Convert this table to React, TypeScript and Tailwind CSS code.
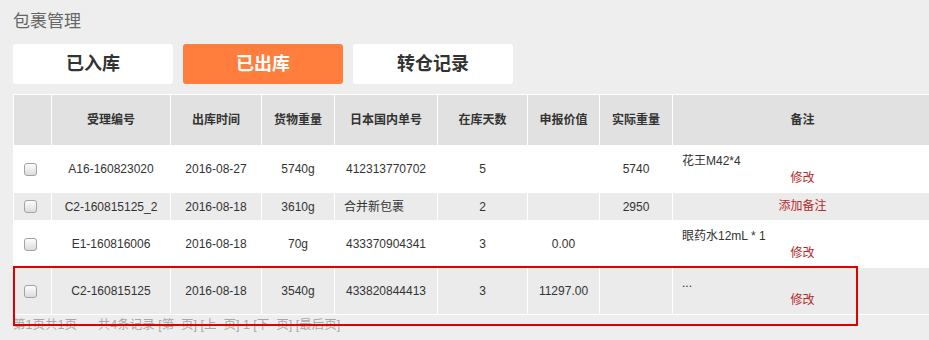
import React from 'react'

type Row = {
  no: string
  date: string
  weight: string
  jpNo: string
  days: string
  value: string
  actual: string
  note: string
  action: string
  tall: boolean
  shaded: boolean
}

const rows: Row[] = [
  { no: 'A16-160823020', date: '2016-08-27', weight: '5740g', jpNo: '412313770702', days: '5', value: '', actual: '5740', note: '花王M42*4', action: '修改', tall: true, shaded: false },
  { no: 'C2-160815125_2', date: '2016-08-18', weight: '3610g', jpNo: '合并新包裹', days: '2', value: '', actual: '2950', note: '', action: '添加备注', tall: false, shaded: true },
  { no: 'E1-160816006', date: '2016-08-18', weight: '70g', jpNo: '433370904341', days: '3', value: '0.00', actual: '', note: '眼药水12mL * 1', action: '修改', tall: true, shaded: false },
  { no: 'C2-160815125', date: '2016-08-18', weight: '3540g', jpNo: '433820844413', days: '3', value: '11297.00', actual: '', note: '...', action: '修改', tall: true, shaded: true },
]

const headers = ['', '受理编号', '出库时间', '货物重量', '日本国内单号', '在库天数', '申报价值', '实际重量', '备注']

function Checkbox() {
  return (
    <span className="block w-[13px] h-[13px] rounded-[3px] border border-[#a3a3a3] bg-gradient-to-b from-[#fdfdfd] to-[#dcdcdc]" />
  )
}

export default function App() {
  return (
    <div className="relative w-[929px] h-[340px] overflow-hidden bg-[#eeeeee] text-[#333] font-['Liberation_Sans','Noto_Sans_CJK_SC',sans-serif]">
      <div className="pl-[13px] pt-[11px]">
        <h2 className="text-[17px] leading-[22px] text-[#666]">包裹管理</h2>

        <div className="mt-[11px] flex gap-[10px]">
          <button className="w-[160px] h-[40px] rounded-[3px] bg-white text-[18px] font-bold text-[#333]">已入库</button>
          <button className="w-[160px] h-[40px] rounded-[3px] bg-[#ff7e3d] text-[18px] font-bold text-white">已出库</button>
          <button className="w-[160px] h-[40px] rounded-[3px] bg-white text-[18px] font-bold text-[#333]">转仓记录</button>
        </div>

        <table className="mt-[10px] w-[919px] table-fixed border-collapse text-[12px]">
          <colgroup>
            <col className="w-[38px]" />
            <col className="w-[119px]" />
            <col className="w-[91px]" />
            <col className="w-[73px]" />
            <col className="w-[103px]" />
            <col className="w-[90px]" />
            <col className="w-[72px]" />
            <col className="w-[73px]" />
            <col className="w-[260px]" />
          </colgroup>
          <thead>
            <tr className="h-[51px] bg-[#e1e1e1]">
              {headers.map((h, i) => (
                <th key={i} className="border border-white font-bold text-center">{h}</th>
              ))}
            </tr>
          </thead>
          <tbody>
            {rows.map((r) => (
              <tr key={r.no} className={`${r.tall ? 'h-[47px]' : 'h-[28px]'} ${r.shaded ? 'bg-[#ebebeb]' : 'bg-white'}`}>
                <td className="border border-white pl-[10px]">
                  <Checkbox />
                </td>
                <td className="border border-white text-center">{r.no}</td>
                <td className="border border-white text-center">{r.date}</td>
                <td className="border border-white text-center">{r.weight}</td>
                <td className={`border border-white ${r.jpNo === '合并新包裹' ? 'text-left pl-[9px]' : 'text-center'}`}>{r.jpNo}</td>
                <td className="border border-white text-center">{r.days}</td>
                <td className="border border-white text-center">{r.value}</td>
                <td className="border border-white text-center">{r.actual}</td>
                <td className={`border border-white pl-[9px] leading-[17px] ${r.note ? 'align-top pt-[7px]' : ''}`}>
                  {r.note && <div className="h-[17px]">{r.note}</div>}
                  <div className="text-center pr-[9px] text-[#b42a2a]">{r.action}</div>
                </td>
              </tr>
            ))}
          </tbody>
        </table>

        {/* pager */}
        <div className="h-[20px] leading-[20px] text-[12.5px] text-[#a8a8a8] whitespace-pre">
          第1页共1页      共4条记录 [第  页] [上  页] 1 [下  页] [最后页]
        </div>
      </div>

      <div className="absolute left-[13px] top-[266px] w-[845px] h-[60px] border-2 border-[#e00000]" />
    </div>
  )
}
